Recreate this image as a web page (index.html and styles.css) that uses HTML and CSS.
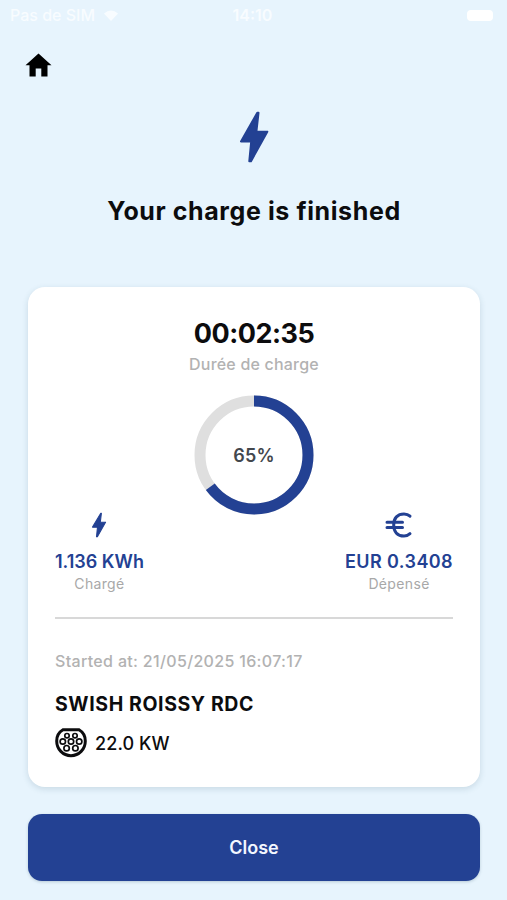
FILE: index.html
```html
<!DOCTYPE html>
<html lang="en">
<head>
    <meta charset="UTF-8">
    <meta name="viewport" content="width=device-width, initial-scale=1.0">
    <title>Charge finished</title>
    <link rel="stylesheet" href="styles.css">
</head>
<body>

<div class="status-bar">
    <div class="carrier">
        <span>Pas de SIM</span>
        <svg width="14" height="11" viewBox="0 0 14 11"><path d="M0 3.5Q7-2.5 14 3.5L7 11Z" fill="currentColor"/></svg>
    </div>
    <span class="clock">14:10</span>
    <div class="battery-slot"><div class="battery"></div></div>
</div>

<div class="top-nav">
    <svg width="28" height="24" viewBox="0 0 28 24"><path d="M13.5 0.5L26.5 12.2H22.5V23.4H16.3V15.4H10.7V23.4H4.5V12.2H0.5Z" fill="#000"/></svg>
</div>

<div class="hero">
    <svg class="bolt" width="30" height="52" viewBox="0 0 30 52"><path d="M18.3 1.8L2 30.5H12.2L10.3 50.2H12L28.3 20.7H17.4L19.5 1.8Z"/></svg>
    <h1>Your charge is finished</h1>
</div>

<div class="card">
    <div class="timer"><span>00:02:35</span></div>
    <div class="timer-label"><span>Durée de charge</span></div>

    <div class="ring">
        <svg width="120" height="120" viewBox="0 0 120 120">
            <circle class="ring-track" cx="60" cy="60" r="54"/>
            <circle class="ring-fill" cx="60" cy="60" r="54" pathLength="100" transform="rotate(-90 60 60)"/>
        </svg>
        <span class="ring-text">65%</span>
    </div>

    <div class="stats">
        <div class="stat">
            <svg class="bolt" width="16" height="28" viewBox="0 0 30 52"><path d="M18.3 3.8L2.8 30H12.2L10.3 48.2H12L27.3 21H17.4L19.5 3.8Z"/></svg>
            <span class="stat-value energy">1.136 KWh</span>
            <span class="stat-label charged">Chargé</span>
        </div>
        <div class="stat">
            <svg class="euro" width="28" height="28" viewBox="0 0 28 28"><path d="M25 5.2C23.3 3.6 21.5 3 19 3C12.5 3 8.7 7 8.7 14S12.5 25 19 25C21.5 25 23.3 24.3 25 22.7M2 11.3H17.5M2 16.6H17.5"/></svg>
            <span class="stat-value cost">EUR 0.3408</span>
            <span class="stat-label spent">Dépensé</span>
        </div>
    </div>

    <hr>

    <div class="started"><span>Started at: 21/05/2025 16:07:17</span></div>
    <div class="station"><span>SWISH ROISSY RDC</span></div>
    <div class="connector">
        <svg width="32" height="30" viewBox="0 0 32 30">
            <path d="M8 1.8H24C28 4.2 30.3 8.4 30.3 12.9C30.3 21.2 24 27.7 16 27.7S1.7 21.2 1.7 12.9C1.7 8.4 4 4.2 8 1.8Z" stroke-width="3"/>
            <g stroke-width="1.7">
                <circle cx="12" cy="7.7" r="2.2"/>
                <circle cx="20" cy="7.7" r="2.2"/>
                <circle cx="7.8" cy="13.5" r="2.7"/>
                <circle cx="16" cy="13.5" r="2.7"/>
                <circle cx="24.2" cy="13.5" r="2.7"/>
                <circle cx="11.6" cy="20.2" r="2.7"/>
                <circle cx="20.4" cy="20.2" r="2.7"/>
            </g>
        </svg>
        <span>22.0 KW</span>
    </div>
</div>

<button class="close-btn"><span>Close</span></button>

</body>
</html>
```
FILE: styles.css
```css
:root {
    --page-bg: #e7f4fd;
    --primary: #234193;
    --muted: #b2b2b2;
    --text-color: #0c0c0e;
}

* {
    box-sizing: border-box;
}

body {
    margin: 0;
    padding: 0 27px 0 28px;
    height: 900px;
    background-color: var(--page-bg);
    color: var(--text-color);
    font-family: 'Inter', 'Liberation Sans', sans-serif;
    overflow: hidden;
}

svg {
    display: block;
    fill: none;
}

.status-bar {
    display: grid;
    grid-template-columns: 1fr auto 1fr;
    align-items: center;
    height: 30px;
    margin: 0 -15px 0 -18px;
    color: #f8fcff;
    font-size: 16px;
    font-weight: 500;
}

.carrier {
    display: flex;
    align-items: center;
    gap: 9px;
}

.clock {
    font-weight: 600;
}

.battery-slot {
    display: flex;
    justify-content: flex-end;
}

.battery {
    width: 26px;
    height: 11px;
    margin-right: 2px;
    border-radius: 4px;
    background-color: #fff;
}

.top-nav {
    margin: 23px 0 0 -3px;
    height: 24px;
}

.hero {
    margin-top: 34px;
    display: flex;
    flex-direction: column;
    align-items: center;
}

.bolt {
    fill: var(--primary);
    stroke: var(--primary);
    stroke-width: 2;
    stroke-linejoin: round;
}

h1 {
    margin: 32px 0 0;
    line-height: 32px;
    font-size: 25px;
    font-weight: 650;
    letter-spacing: 0.6px;
    white-space: nowrap;
}

.card {
    margin-top: 60px;
    height: 500px;
    padding: 31px 27px 0;
    border-radius: 17px;
    background-color: #fff;
    box-shadow: 0 2px 6px rgba(40, 80, 100, 0.16);
}

.timer {
    text-align: center;
    line-height: 32px;
    font-size: 27px;
    font-weight: 700;
    letter-spacing: -0.5px;
}

.timer-label {
    margin-top: 3px;
    text-align: center;
    line-height: 22px;
    font-size: 16px;
    font-weight: 500;
    letter-spacing: 0.2px;
    color: var(--muted);
}

.ring {
    display: grid;
    place-items: center;
    margin-top: 20px;
    height: 120px;
}

.ring > * {
    grid-area: 1 / 1;
}

.ring circle {
    stroke-width: 11;
}

.ring-track {
    stroke: #dfdfdf;
}

.ring-fill {
    stroke: var(--primary);
    stroke-dasharray: 65 100;
}

.ring-text {
    font-size: 18px;
    font-weight: 600;
    letter-spacing: 0.2px;
    color: #43474d;
}

.stats {
    display: flex;
    justify-content: space-between;
    margin-top: -4px;
}

.stat {
    display: flex;
    flex-direction: column;
    align-items: center;
}

.stat-value {
    margin-top: 12px;
    line-height: 22px;
    font-size: 18px;
    font-weight: 600;
    color: var(--primary);
}

.cost {
    letter-spacing: 0.4px;
}

.stat-label {
    margin-top: 1px;
    line-height: 20px;
    font-size: 14px;
    letter-spacing: 0.35px;
    color: #a8a8a8;
}

.euro {
    stroke: var(--primary);
    stroke-width: 3;
    stroke-linecap: round;
}

hr {
    margin: 23px 0 0;
    border: none;
    height: 2px;
    background-color: #d8d8d8;
}

.started {
    margin-top: 32px;
    line-height: 20px;
    font-size: 16px;
    font-weight: 500;
    letter-spacing: 0.33px;
    color: var(--muted);
}

.station {
    margin-top: 21px;
    line-height: 24px;
    font-size: 19.5px;
    font-weight: 650;
    letter-spacing: 0.6px;
}

.connector {
    display: flex;
    align-items: center;
    gap: 8px;
    margin-top: 12px;
    height: 30px;
    font-size: 18px;
    font-weight: 500;
    letter-spacing: 0.1px;
}

.connector svg {
    stroke: #0c0c0e;
}

.close-btn {
    display: block;
    width: 100%;
    height: 67px;
    margin-top: 27px;
    padding: 0;
    border: none;
    border-radius: 14px;
    background-color: var(--primary);
    box-shadow: 0 1px 3px rgba(40, 80, 100, 0.25);
    color: #f3f7ff;
    font-family: inherit;
    font-size: 18px;
    font-weight: 600;
    cursor: pointer;
}
```
